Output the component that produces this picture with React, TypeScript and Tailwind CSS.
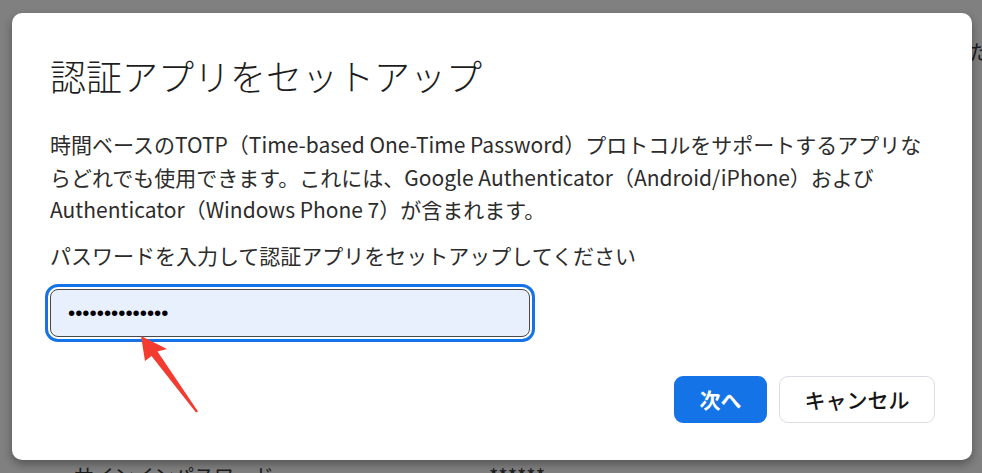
import React from "react";

export default function App() {
  return (
    <div
      className="relative w-[982px] h-[473px] overflow-hidden bg-[#808080]"
      style={{ fontFamily: '"Noto Sans CJK JP", "Noto Sans", sans-serif' }}
    >
      {/* page behind the overlay */}
      <div className="absolute left-[969px] top-[38px] text-[20px] leading-[28px] text-[#1c1c1c]">
        た
      </div>
      <div className="absolute left-[74px] top-[462px] flex text-[20px] leading-[28px] text-[#1c1c1c]">
        <span className="w-[415px]">サインインパスワード</span>
        <span>******</span>
      </div>

      {/* dialog */}
      <div className="absolute left-[12px] top-[13px] w-[960px] h-[447px] rounded-[10px] bg-white shadow-[0_4px_10px_rgba(0,0,0,0.35)] pl-[38px] pr-[37px] pt-[40px] pb-[37px] flex flex-col">
        <h1 className="text-[36px] leading-[44px] font-light text-[#1d1d1d]">
          認証アプリをセットアップ
        </h1>
        <p className="mt-[31px] text-[21px] leading-[32.5px] text-[#2c2c2c] whitespace-nowrap">
          時間ベースのTOTP（Time-based One-Time Password）プロトコルをサポートするアプリな
          <br />
          らどれでも使用できます。これには、Google Authenticator（Android/iPhone）および
          <br />
          Authenticator（Windows Phone 7）が含まれます。
        </p>
        <p className="mt-[13px] text-[21px] leading-[33px] text-[#2c2c2c]">
          パスワードを入力して認証アプリをセットアップしてください
        </p>
        <div className="mt-[17px] w-[480px] h-[48px] rounded-[8px] outline-[3px] outline-solid outline-[#1473e6] outline-offset-[2px]">
          <input
            type="password"
            readOnly
            defaultValue="abcdefghijklmn"
            className="w-full h-full rounded-[8px] border border-[#4a4a4a] bg-[#e8f0fe] px-[17px] text-[20.5px] text-black outline-none"
            style={{ fontFamily: '"Liberation Sans", Arial, sans-serif' }}
          />
        </div>
        <div className="mt-auto flex justify-end gap-[12px]">
          <button className="w-[93px] h-[47px] rounded-[9px] bg-[#1473e6] text-white text-[21px] font-bold">
            次へ
          </button>
          <button className="w-[156px] h-[47px] rounded-[9px] bg-white border border-[#d9dde3] text-[#161616] text-[21px] font-medium">
            キャンセル
          </button>
        </div>
      </div>

      {/* annotation arrow */}
      <svg
        className="absolute left-0 top-0 pointer-events-none"
        width="982"
        height="473"
        viewBox="0 0 982 473"
      >
        <polygon
          points="141,336 167,349 157.5,351.5 198,411.5 196,412.5 151.5,356 145,361"
          fill="#f33b2f"
        />
      </svg>
    </div>
  );
}
